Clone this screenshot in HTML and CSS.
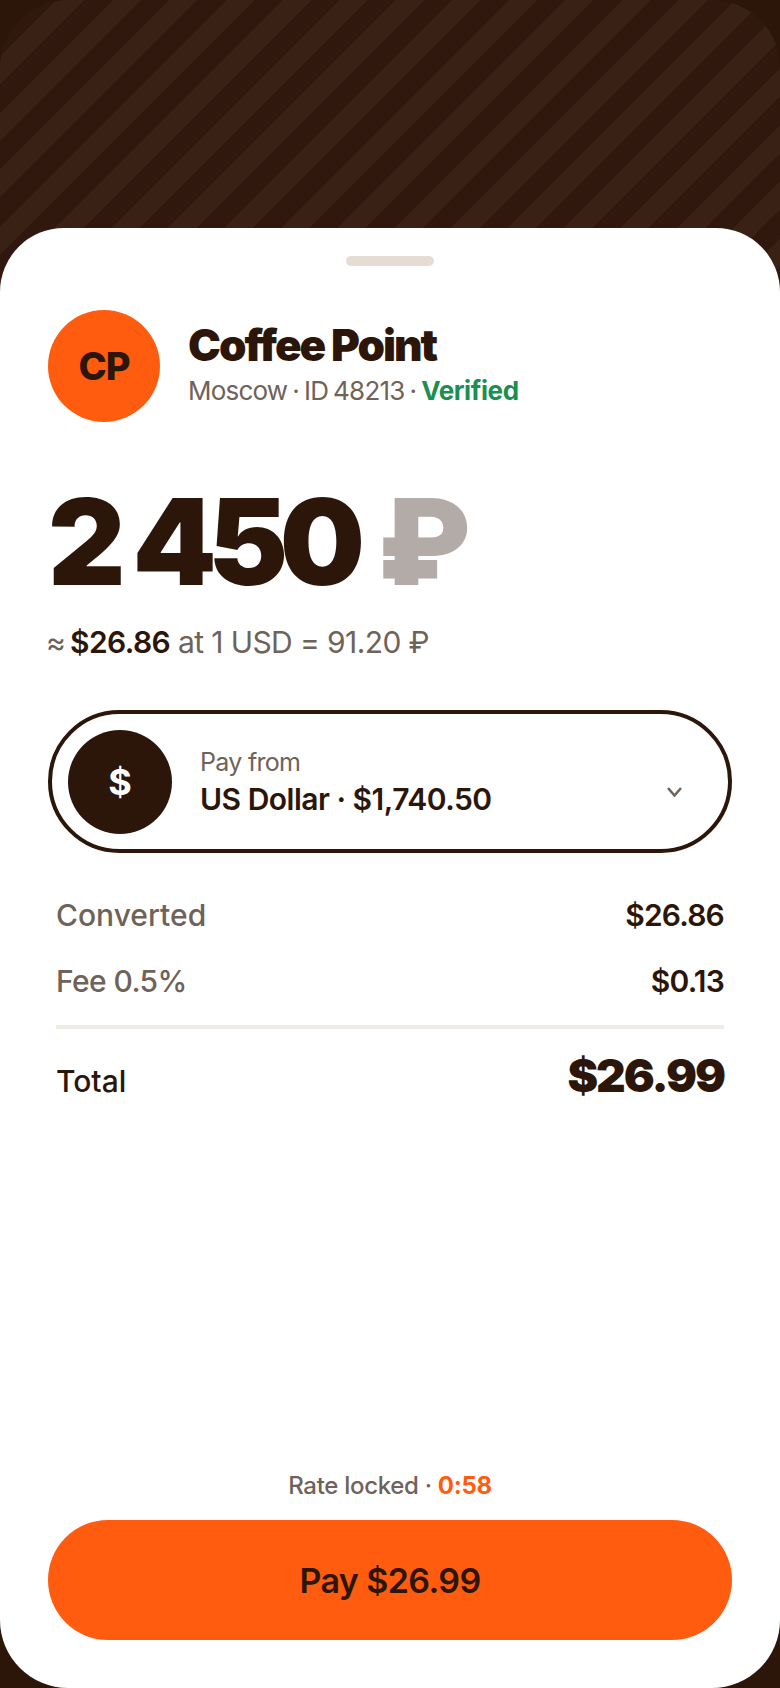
FILE: index.html
```html
<!DOCTYPE html>
<html>
<head>
  <meta charset="UTF-8">
  <title>Pay Coffee Point</title>
  <link rel="stylesheet" href="styles.css">
</head>
<body>
  <div class="screen">
    <div class="sheet">
      <div class="handle"></div>

      <!-- Merchant -->
      <div class="merchant">
        <div class="avatar">CP</div>
        <div class="merchant-info">
          <div class="merchant-name">Coffee Point</div>
          <div class="merchant-meta">Moscow · ID 48213 · <span class="verified">Verified</span></div>
        </div>
      </div>

      <!-- Amount -->
      <div class="amount">2 450 <span class="amount-currency">₽</span></div>
      <div class="rate"><span class="approx">≈</span> <strong>$26.86</strong> at 1 USD = 91.20 ₽</div>

      <!-- Source account -->
      <div class="source">
        <div class="coin">$</div>
        <div class="source-info">
          <div class="source-label">Pay from</div>
          <div class="source-value">US Dollar · $1,740.50</div>
        </div>
        <svg class="chevron" width="15" height="10" viewBox="0 0 15 10" fill="none" stroke="#6f6259" stroke-width="2.5"><path d="M1 1l6.500 7.500 6.500-7.500"/></svg>
      </div>

      <!-- Breakdown -->
      <div class="breakdown">
        <div class="row"><span class="row-label">Converted</span><span class="row-value">$26.86</span></div>
        <div class="row"><span class="row-label tight">Fee 0.5%</span><span class="row-value">$0.13</span></div>
        <div class="row total"><span class="total-label">Total</span><span class="total-value">$26.99</span></div>
      </div>

      <div class="footer">
        <div class="lock">Rate locked · <span class="timer">0:58</span></div>
        <button class="pay">Pay $26.99</button>
      </div>
    </div>
  </div>
</body>
</html>
```

FILE: styles.css
```css
html, body {
  margin: 0;
  padding: 0;
  background-color: #2b1609;
}
body {
  font-family: Inter, "Noto Sans", sans-serif;
  color: #2b1609;
}
.screen {
  width: 780px;
  height: 1688px;
  box-sizing: border-box;
  padding-top: 228px;
  border-radius: 68px;
  background: repeating-linear-gradient(135deg, #3a2115 0, #3a2115 20px, #31180e 20px, #31180e 40px);
}
.sheet {
  height: 1460px;
  box-sizing: border-box;
  padding: 28px 48px 48px;
  background-color: white;
  border-radius: 64px 64px 68px 68px;
  display: flex;
  flex-direction: column;
}
.handle {
  width: 88px;
  height: 10px;
  margin: 0 auto;
  border-radius: 5px;
  background-color: #e5ddd3;
}
.merchant {
  display: flex;
  align-items: center;
  gap: 28px;
  margin-top: 44px;
}
.avatar {
  width: 112px;
  height: 112px;
  border-radius: 50%;
  background-color: #ff5c10;
  display: flex;
  align-items: center;
  justify-content: center;
  font-size: 38px;
  font-weight: 800;
  letter-spacing: -1px;
}
.merchant-name {
  margin-top: -6px;
  font-size: 44px;
  line-height: 50px;
  font-weight: 900;
  letter-spacing: -2px;
}
.merchant-meta {
  margin-top: 5px;
  font-size: 26px;
  line-height: 32px;
  letter-spacing: -0.8px;
  word-spacing: -1.5px;
  color: #6f6259;
}
.verified {
  color: #1a8f4f;
  font-weight: 700;
  letter-spacing: -0.4px;
}
.amount {
  margin-top: 50px;
  font-size: 120px;
  line-height: 140px;
  font-weight: 900;
  letter-spacing: -8.5px;
}
.amount-currency {
  margin-left: 5px;
  color: #b3aba7;
}
.rate {
  margin-top: 10px;
  margin-left: -2px;
  font-size: 30px;
  line-height: 40px;
  letter-spacing: -0.6px;
  color: #6f6259;
}
.approx {
  margin-right: -3px;
}
.rate strong {
  color: #2b1609;
  font-weight: 600;
}
.source {
  margin-top: 48px;
  height: 143px;
  box-sizing: border-box;
  padding: 0 46px 0 16px;
  border: 4px solid #2b1609;
  border-radius: 72px;
  display: flex;
  align-items: center;
  gap: 28px;
}
.coin {
  width: 104px;
  height: 104px;
  border-radius: 50%;
  background-color: #2b1609;
  color: white;
  display: flex;
  align-items: center;
  justify-content: center;
  font-size: 36px;
  font-weight: 700;
}
.source-info {
  flex: 1;
  padding-top: 2px;
}
.source-label {
  margin-bottom: 1px;
  font-size: 25px;
  line-height: 32px;
  letter-spacing: -0.7px;
  color: #6f6259;
}
.source-value {
  font-size: 30px;
  line-height: 40px;
  letter-spacing: -0.5px;
  font-weight: 600;
}
.chevron {
  margin-top: 21px;
}
.breakdown {
  margin: 29px 8px 0;
}
.row {
  display: flex;
  justify-content: space-between;
  align-items: center;
  height: 66px;
  font-size: 30px;
}
.row-label {
  color: #6f6259;
  font-weight: 500;
}
.row-label.tight {
  letter-spacing: -0.6px;
}
.row-value {
  font-weight: 600;
  letter-spacing: -0.8px;
}
.total {
  margin-top: 11px;
  height: 100px;
  border-top: 4px solid #f1ebe3;
  align-items: baseline;
  padding-top: 18px;
  box-sizing: border-box;
}
.total-label {
  font-weight: 500;
}
.total-value {
  font-size: 46px;
  font-weight: 900;
  letter-spacing: -2px;
}
.footer {
  margin-top: auto;
}
.lock {
  text-align: center;
  font-size: 24px;
  line-height: 32px;
  letter-spacing: -0.3px;
  font-weight: 500;
  color: #6f6259;
}
.timer {
  color: #ff5c10;
  font-weight: 700;
}
.pay {
  display: block;
  width: 100%;
  height: 120px;
  margin-top: 18px;
  border: none;
  border-radius: 60px;
  background-color: #ff5c10;
  color: #2b1609;
  font-family: inherit;
  font-size: 34px;
  letter-spacing: -0.6px;
  font-weight: 600;
}
```
